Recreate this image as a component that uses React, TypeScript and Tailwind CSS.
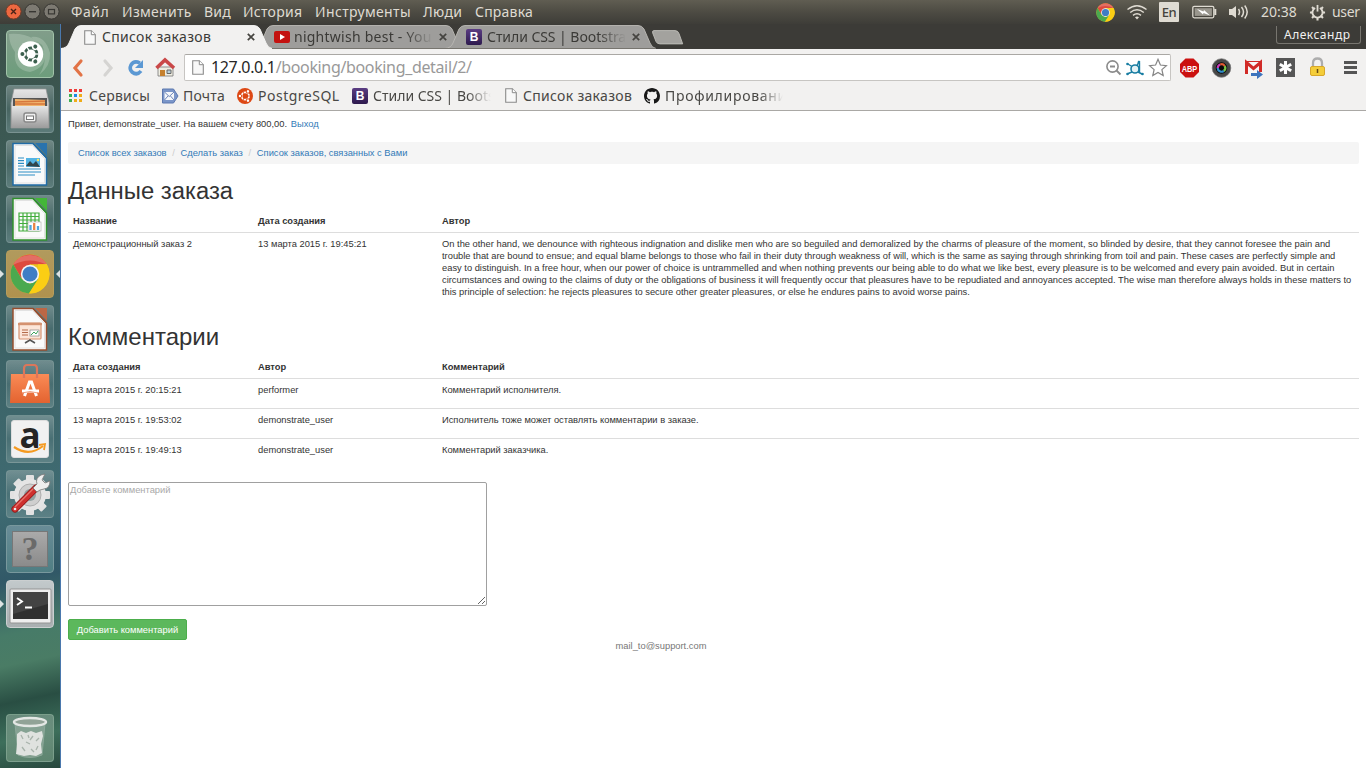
import React from 'react';

const Page = ({ className = '' }: { className?: string }) => (
  <svg viewBox="0 0 12 15" className={'h-[15px] w-3 shrink-0 ' + className}>
    <path d="M.7.7h6.6l4 4v9.6H.7z" fill="#f8f8f8" stroke="#8b8b8b" strokeWidth="1.1" />
    <path d="M7.3.7v4h4" fill="#fff" stroke="#8b8b8b" />
  </svg>
);

const BootstrapMark = () => (
  <span className="flex h-4 w-4 shrink-0 items-center justify-center rounded-[2px] bg-linear-to-b from-[#5b3d83] to-[#2e1a4e] font-['Liberation_Sans',sans-serif] text-[12px] font-bold leading-none text-white">
    B
  </span>
);

const Friends = ({ color, bg }: { color: string; bg: string }) => (
  <g>
    <circle r="6" fill="none" stroke={color} strokeWidth="2.8" />
    {[0, 120, 240].map((a) => (
      <g key={a} transform={`rotate(${a})`}>
        <circle cx="-8" r="3" fill={bg} />
        <circle cx="-8.6" r="2" fill={color} />
        <path d="M3 0h6" stroke={bg} strokeWidth="1.3" />
      </g>
    ))}
  </g>
);

const Chrome = ({ className }: { className: string }) => (
  <svg viewBox="-20 -20 40 40" className={className}>
    <circle r="19.4" fill="#e9c41d" />
    <path d="M-16.8-9.7A19.4 19.4 0 0 1 16.8-9.7L0-9.7L-8.4 4.8z" fill="#dd4a3e" />
    <path d="M-16.8-9.7L-8.4 4.8L0 9.7L8.4 4.8L-1 19.4A19.4 19.4 0 0 1-16.8-9.7z" fill="#4ba94f" />
    <path d="M16.8-9.7A19.4 19.4 0 0 1-1 19.4L8.4 4.8L8-9.7z" fill="#fbce14" />
    <circle r="9.2" fill="#f3f3f3" />
    <circle r="7.6" fill="#3f7dc5" />
    <path d="M-17-9A19.4 19.4 0 0 1 17-9Q0-18-17-9z" fill="#fff" opacity=".2" />
  </svg>
);

const Doc = ({ color, light, children }: { color: string; light: string; children: React.ReactNode }) => (
  <svg viewBox="0 0 48 48" className="h-full w-full">
    <path d="M7 3.500h20l13.500 14.500v27H7z" fill="#fafafa" stroke={color} strokeWidth="1.5" />
    <path d="M9 5.500h17.500l12 13v24.500H9z" fill="none" stroke="#e2e2e2" />
    <path d="M29 3h12v13z" fill={light} />
    <path d="M27 3.500l13.500 14.500" stroke={color} strokeWidth="1.2" />
    {children}
  </svg>
);

const tileBase = 'relative h-12 w-12 shrink-0 rounded-[4px] border ';
const tileGlass = 'border-[#86a0a0]/50 bg-linear-to-b from-[#a4b5b5]/50 via-[#5f8082]/35 to-[#789798]/55';

const Tile = ({ children, className = tileGlass }: { children: React.ReactNode; className?: string }) => (
  <div className={tileBase + className}>
    <div className="absolute -inset-px">{children}</div>
  </div>
);

const Launcher = () => (
  <aside className="flex w-[61px] shrink-0 flex-col items-start gap-[7px] border-r border-[#4a78ad] bg-[linear-gradient(168deg,#3b4f48_0%,#3c5c57_20%,#3c6367_45%,#3f6b72_64%,#315867_74%,#477b68_81%,#4a7c65_85%,#294e43_90%,#3d6f5b_95%,#28483e_100%)] pt-[6px] pb-[6px] pl-[6px]">
    <Tile className="border-[#a1c3a9] bg-linear-to-b from-[#819d8a] to-[#6d9d7c]">
      <svg viewBox="0 0 48 48" className="h-full w-full">
        <path d="M3 4Q30 2 39 23Q40 38 24 42Q7 40 9 22Q3 14 3 4M25 7Q39 5 44 23Q45 36 33 45Q43 30 36 15" fill="#d9ead9" opacity=".27" />
        <circle cx="24.5" cy="24" r="12.7" fill="#fff" />
        <g transform="translate(25 24)"><Friends color="#3b5f4e" bg="#fff" /></g>
      </svg>
    </Tile>
    <Tile>
      <svg viewBox="0 0 48 48" className="h-full w-full">
        <defs><linearGradient id="drawer" x2="0" y2="1"><stop stopColor="#e6e6e6" /><stop offset="1" stopColor="#9b9b9b" /></linearGradient></defs>
        <path d="M8 4h32l3 14v25H5V18z" fill="url(#drawer)" stroke="#999" strokeWidth=".7" />
        <path d="M7 13h34v8H7z" fill="#555" />
        <path d="M9 14l30 1v6H9z" fill="#f0b66f" />
        <path d="M9 17l30-1M9 19h30" stroke="#d7773c" strokeWidth="1.3" />
        <path d="M6 21h36v22H6z" fill="url(#drawer)" />
        <rect x="18" y="28" width="12" height="9" rx="2" fill="#eee" stroke="#888" strokeWidth="1.4" />
        <rect x="20.5" y="31" width="7" height="3.5" fill="#fff" stroke="#777" />
      </svg>
    </Tile>
    <Tile>
      <Doc color="#216ba5" light="#2a73ad">
        <path d="M12 18h6M12 20.7h6M12 23.3h6M12 26h6M12 29h23M12 32h23M12 35h17" stroke="#2c8dc4" strokeWidth="1.2" />
        <rect x="20" y="18" width="14" height="9" fill="#54b4e4" />
        <path d="M20 26l4-5 3 3 3-3 4 6z" fill="#31464b" />
        <circle cx="32" cy="20" r="1.2" fill="#f1e767" />
      </Doc>
    </Tile>
    <Tile>
      <Doc color="#30912c" light="#43b637">
        <path d="M13 18h20v18H13zM13 21.5h20M13 25h20M13 28.5h20M13 32h20M17 18v18M21 18v18M25 18v18M29 18v18" fill="none" stroke="#42ad3c" strokeWidth="1.2" />
        <rect x="22" y="27" width="13" height="9" fill="#fff" stroke="#aaa" strokeWidth=".6" />
        <path d="M24.5 35v-5" stroke="#4fa5dd" strokeWidth="2.3" /><path d="M28.2 35v-7" stroke="#e98345" strokeWidth="2.3" /><path d="M32 35v-4" stroke="#4fa5dd" strokeWidth="2.3" />
      </Doc>
    </Tile>
    <div className="relative">
      <Tile className="border-[#b69d5d] bg-linear-to-b from-[#b19a5d] to-[#b0924e]">
        <Chrome className="m-[4px] h-10 w-10" />
      </Tile>
      <svg viewBox="0 0 61 10" className="absolute top-[19px] -left-[6px] h-[10px] w-[61px]">
        <path d="M0 1l4 4-4 4zM60 1l-4 4 4 4z" fill="#dde3e3" />
      </svg>
    </div>
    <Tile>
      <Doc color="#974d2d" light="#bc6745">
        <rect x="13" y="18" width="22" height="16" rx="1" fill="#fce6d9" stroke="#d59270" strokeWidth="1.2" />
        <path d="M12 19h24" stroke="#d59270" strokeWidth="2.4" />
        <path d="M16 25h6M16 27.5h6M16 30h6" stroke="#b46b4b" strokeWidth="1.2" />
        <rect x="24" y="25" width="9" height="6" fill="#fff" stroke="#777" strokeWidth=".6" />
        <path d="M25 30l3-3 2 2 2-3" fill="none" stroke="#3ba35c" />
        <path d="M24 34v2m-5 2l5-3 5 3" fill="none" stroke="#555" strokeWidth="1.6" />
      </Doc>
    </Tile>
    <Tile>
      <svg viewBox="0 0 48 48" className="h-full w-full">
        <defs><linearGradient id="bag" x2="0" y2="1"><stop stopColor="#fa8b56" /><stop offset="1" stopColor="#e36330" /></linearGradient></defs>
        <path d="M5 14h38l1 29H4z" fill="url(#bag)" />
        <path d="M18 18V9q0-4 3-4h7q3 0 3 4v9" fill="none" stroke="#dc765a" strokeWidth="2.2" />
        <path d="M18.500 36l5-14h2l5 14" fill="none" stroke="#fff" strokeWidth="3" />
        <path d="M16 31h17" stroke="#fff" strokeWidth="3" /><path d="M16 33q8-3 16 0" fill="none" stroke="#eea183" />
      </svg>
    </Tile>
    <Tile>
      <div className="relative m-[5px] h-[38px] w-[38px] rounded-[3px] border border-[#dedede] bg-[#f1f1f1] font-['Open_Sans',sans-serif]">
        <span className="absolute inset-x-0 -top-[4px] text-center text-[35px] font-bold leading-[36px] text-[#252525]">a</span>
        <svg viewBox="0 0 38 38" className="absolute -inset-px h-[38px] w-[38px]">
          <path d="M3 27q15 10 29-1" fill="none" stroke="#f49a20" strokeWidth="2.2" />
          <path d="M28 25l6-1-1 6" fill="none" stroke="#f49a20" strokeWidth="1.8" />
        </svg>
      </div>
    </Tile>
    <Tile>
      <svg viewBox="0 0 48 48" className="h-full w-full">
        <g transform="translate(24 25)">
          {[0, 45, 90, 135].map((a) => <rect key={a} x="-4" y="-20" width="8" height="40" rx="1" fill="#e2e2e2" transform={`rotate(${a})`} />)}
          <circle r="16" fill="#e5e5e5" /><circle r="11" fill="#cfcfcf" stroke="#aeaeae" /><circle r="6" fill="#91a1a1" />
        </g>
        <path d="M9 39L30 18" stroke="#8d1818" strokeWidth="7" strokeLinecap="round" />
        <path d="M9 39L30 18" stroke="#ce302e" strokeWidth="5.400" strokeLinecap="round" />
        <path d="M9 37L27 19" stroke="#e7736b" strokeWidth="1.3" />
        <path d="M27 18l4-4q-2-6 4-9l4-1-3 6 3 3 5-2q0 7-6 8l-4 1-3 2z" fill="#eee" stroke="#777" strokeWidth=".8" />
        <circle cx="9" cy="39" r="1.3" fill="#eee" />
      </svg>
    </Tile>
    <Tile className="border-[#78989d] bg-linear-to-b from-[#698c97] to-[#4f7e83]">
      <div className="m-[6px] flex h-9 w-9 items-center justify-center border border-[#777] bg-linear-to-b from-[#aaa] to-[#8b8b8b] font-['Liberation_Serif',serif] text-[34px] font-bold leading-none text-[#6a6a6a]">?</div>
    </Tile>
    <div className="relative">
      <Tile className="border-[#cbcfd0] bg-linear-to-b from-[#c2c9cb] to-[#a9afb1]">
        <svg viewBox="0 0 48 48" className="h-full w-full">
          <rect x="4" y="9" width="41" height="34" rx="1" fill="#eee" stroke="#949494" />
          <rect x="7" y="12" width="35" height="27" fill="#303030" />
          <path d="M7 12h35v12L7 34z" fill="#555" opacity=".5" />
          <path d="M11 18l5 3.500-5 3.500M19 27.500h7" fill="none" stroke="#fff" strokeWidth="1.9" />
        </svg>
      </Tile>
      <svg viewBox="0 0 5 10" className="absolute top-[19px] -left-[6px] h-[10px] w-[5px]"><path d="M0 1l4 4-4 4z" fill="#dde3e3" /></svg>
    </div>
    <div className="mt-auto">
      <Tile className="border-[#8daf9d]/60 bg-linear-to-b from-[#809f90]/70 to-[#6b927b]/80">
        <svg viewBox="0 0 48 48" className="h-full w-full">
          <path d="M9 9l3 32q12 5 24 0l3-32z" fill="#bdc9c1" opacity=".35" stroke="#d5ded8" />
          <path d="M11 20l4-3 5 2 5-2 5 2 6-2 1 5-2 8 1 9-6 3-6-1-6 1-8-2 1-10z" fill="#dfe2df" />
          <path d="M15 21l2 4M20 28l4 2M27 22l-3 4M33 24l-3 3M16 33l3 4M25 35l3 3M32 32l-2 4M22 21l1 3" fill="none" stroke="#a8b3ab" strokeWidth="1.3" />
          <ellipse cx="24" cy="8" rx="16" ry="4" fill="#91a397" stroke="#e3e7e4" strokeWidth="2.4" />
        </svg>
      </Tile>
    </div>
  </aside>
);

const menu = [
  { t: 'Файл', c: 'w-[51px] tracking-[0.5px]' },
  { t: 'Изменить', c: 'w-[82px] tracking-[0.3px]' },
  { t: 'Вид', c: 'w-[39px] tracking-[0.2px]' },
  { t: 'История', c: 'w-[72px] tracking-[0.25px]' },
  { t: 'Инструменты', c: 'w-[108px] tracking-[0.35px]' },
  { t: 'Люди', c: 'w-[52px] tracking-[0.3px]' },
  { t: 'Справка', c: 'w-[70px] tracking-[0.2px]' },
];

const TopBar = () => (
  <header className="flex h-6 shrink-0 items-center bg-linear-to-b from-[#605d52] via-[#4d4b43] to-[#3e3d38] text-[14px] leading-6 text-[#dfdbd2]">
    <svg viewBox="0 0 60 24" className="h-6 w-[71px] shrink-0 pr-[11px]">
      <circle cx="13.5" cy="11.5" r="7.6" fill="#ee6840" stroke="#733a27" />
      <path d="M11 9l5 5m0-5l-5 5" stroke="#4a2317" strokeWidth="1.4" />
      <circle cx="32.5" cy="11.5" r="7.6" fill="#7d7a72" stroke="#383733" /><path d="M29 11.7h7" stroke="#383733" strokeWidth="1.4" />
      <circle cx="51.5" cy="11.5" r="7.6" fill="#7d7a72" stroke="#383733" /><rect x="48.5" y="9.5" width="6" height="4.4" fill="none" stroke="#383733" strokeWidth="1.2" />
    </svg>
    {menu.map((m) => <span key={m.t} className={'shrink-0 whitespace-nowrap ' + m.c}>{m.t}</span>)}
    <div className="ml-auto flex items-center">
      <Chrome className="h-[19px] w-[19px]" />
      <svg viewBox="0 0 22 18" className="ml-[11px] h-[18px] w-[22px]" fill="none" stroke="#dfdbd2" strokeWidth="1.5">
        <path d="M1.500 6.500q9.500-7.500 19 0M4.200 9.500q6.800-5.300 13.600 0M7 12.300q4-3 8 0" /><path d="M9 14.200q2-1.300 4 0l-2 2.300z" fill="#dfdbd2" stroke="none" />
      </svg>
      <span className="ml-[11px] flex h-5 w-5 items-center justify-center rounded-[1px] bg-[#dfdbd2] text-[13px] font-medium tracking-[-0.4px] text-[#45433c]">En</span>
      <svg viewBox="0 0 25 16" className="ml-[13px] h-4 w-[25px]">
        <rect x=".8" y="2.3" width="21" height="11.500" rx="1.5" fill="none" stroke="#dfdbd2" strokeWidth="1.3" /><path d="M23.300 5v6" stroke="#dfdbd2" strokeWidth="2" />
        <rect x="2.7" y="4.2" width="17.2" height="7.700" fill="#99968d" /><path d="M5 5l6.500 2.500.5-1.500 6 5.500-6.500-2.500-.5 1.500z" fill="#fff" />
      </svg>
      <svg viewBox="0 0 21 18" className="ml-[11px] h-[18px] w-[21px]" fill="none" stroke="#dfdbd2" strokeWidth="1.5">
        <path d="M1 6h3l4-3v12l-4-3H1z" fill="#dfdbd2" stroke="none" /><path d="M10.5 6q2 3 0 6M13.5 4q4 5 0 10M16.7 2.5q5 6.5 0 13" />
      </svg>
      <span className="ml-[12px] w-[48px]">20:38</span>
      <svg viewBox="0 0 18 18" className="h-[17px] w-[17px]" fill="none" stroke="#dfdbd2">
        <path d="M6.500 4.200a5.400 5.400 0 1 0 5 0" strokeWidth="2" /><path d="M9 1v7" strokeWidth="1.9" /><path d="M1 9h3m10 0h3M9 14v3.5M3.2 3.2l2 2m9.6-2l-2 2M3.2 14.8l2-2m9.6 2l-2-2" strokeWidth="2.2" />
      </svg>
      <span className="ml-[6px] w-[34px] tracking-[-0.3px]">user</span>
    </div>
  </header>
);

const TabShape = ({ active = false }: { active?: boolean }) => (
  <svg viewBox="0 0 211 25" className="absolute top-0 left-0 h-[25px] w-[211px]">
    <path d="M0 24.5Q6 24 8 19L14 5Q16 1.5 20 1.5H193Q197 1.5 199 5L205 19Q207 24 211 24.5z" fill={active ? '#f2f1f0' : '#9e9d9b'} stroke={active ? '#f7f7f6' : '#bbb9b4'} strokeWidth=".9" />
    {active ? <path d="M0 24.5h211" stroke="#f2f1f0" /> : <path d="M0 24.5h211" stroke="#77756f" />}
  </svg>
);

const Tab = ({ icon, text, active = false, className }: { icon: React.ReactNode; text: string; active?: boolean; className: string }) => (
  <div className={'relative h-[25px] w-[192px] shrink-0 ' + (active ? 'z-10' : '')}>
    <TabShape active={active} />
    <div className="relative flex h-[25px] items-center pt-px">
      <span className="ml-[22px] flex w-[20px] shrink-0">{icon}</span>
      <span className={'w-[139px] shrink-0 overflow-hidden whitespace-nowrap text-[14px] leading-6 text-[#3b3a37] ' + className}>{text}</span>
      <svg viewBox="0 0 8 8" className="ml-[6px] h-2 w-2 shrink-0"><path d="M.8.8l6.4 6.4m0-6.4L.8 7.2" stroke="#454440" strokeWidth="1.7" /></svg>
    </div>
  </div>
);

const fadeEnd = '[mask-image:linear-gradient(to_right,#000_80%,transparent)]';

const TabStrip = () => (
  <div className="flex h-[25px] items-start bg-[#3c3b37]">
    <Tab active icon={<Page className="ml-px" />} text="Список заказов" className="-ml-px tracking-[0.3px]" />
    <Tab icon={<svg viewBox="0 0 16 12" className="h-3 w-4 -ml-px"><rect width="16" height="12" rx="2" fill="#c41210" /><path d="M6 3l5 3-5 3z" fill="#fff" /></svg>} text="nightwish best - You" className={'-ml-px tracking-[0.25px] ' + fadeEnd} />
    <Tab icon={<span className="-ml-px"><BootstrapMark /></span>} text="Стили CSS | Bootstra" className={'tracking-[-0.05px] ' + fadeEnd} />
    <svg viewBox="0 0 32 15" className="mt-[6px] ml-[15px] h-[15px] w-8"><path d="M2 .6h21q3 0 4 3l3.7 10.3H8q-3 0-4-2.4L.7 3Q0 .6 2 .6z" fill="#a3a29e" stroke="#c0beb9" strokeWidth=".9" /></svg>
    <span className="mr-[5px] ml-auto mt-[2px] h-[18px] w-[85px] whitespace-nowrap rounded-b-[3px] border border-t-0 border-[#77756f] pl-[7px] text-[12px] leading-[18px] tracking-[0.5px] text-[#f2f1f0]">Александр</span>
  </div>
);

const Toolbar = () => (
  <div className="flex h-[35px] items-center pt-px">
    <svg viewBox="0 0 120 24" className="ml-[9px] mt-px h-6 w-[120px] shrink-0" fill="none">
      <path d="M11 5L5 12l6 7" stroke="#e27346" strokeWidth="3.2" strokeLinecap="round" />
      <path d="M35 5l6 7-6 7" stroke="#d5d4d2" strokeWidth="3.2" strokeLinecap="round" />
      <path d="M70 7q-6-3-9 2-2 4 1 7 5 4 9-1" stroke="#5b98d3" strokeWidth="3.600" /><path d="M73 4v8h-8z" fill="#5b98d3" />
      <path d="M88 11h15v9H88z" fill="#efede1" stroke="#777" strokeWidth=".8" /><path d="M86.500 12l8.500-8 9 8" stroke="#ca4848" strokeWidth="3.600" /><path d="M90 14h5v6h-5z" fill="#c5802e" /><path d="M97 14h4v3.500h-4z" fill="#b8cfda" stroke="#666" />
    </svg>
    <div className="ml-[-6px] flex h-[27px] w-[987px] items-center rounded-[2px] border border-[#c7c5c2] border-t-[#aaa8a4] bg-white pl-[7px]">
      <Page />
      <span className="ml-[7px] whitespace-nowrap text-[16px] leading-6 tracking-[-0.35px] text-[#999]"><span className="text-[#272727]">127.0.0.1</span>/booking/booking_detail/2/</span>
      <svg viewBox="0 0 64 20" className="mr-[1px] ml-auto mt-px h-5 w-16 shrink-0" fill="none">
        <circle cx="7.500" cy="8.500" r="5.6" stroke="#8b8b8b" strokeWidth="1.6" /><path d="M5 8.500h5M11.500 12.500l4 4" stroke="#8b8b8b" strokeWidth="1.8" />
        <circle cx="30" cy="11" r="4" fill="#e4f2f6" stroke="#187da2" strokeWidth="1.6" /><path d="M22 5.500l5 3M22 16l5-2M32 8l2-5M34.500 5v10M33 14l4 2" stroke="#187da2" strokeWidth="1.4" />
        <circle cx="22.500" cy="6" r="1.3" fill="#187da2" /><circle cx="22.500" cy="16" r="1.3" fill="#187da2" /><circle cx="34" cy="4" r="1.3" fill="#187da2" /><circle cx="37.500" cy="16" r="1.3" fill="#187da2" />
        <path d="M53 1.3l2.400 5.700 6 .6-4.500 4 1.3 5.900-5.200-3.100-5.200 3.100 1.3-5.900-4.500-4 6-.6z" stroke="#858585" strokeWidth="1.2" />
      </svg>
    </div>
    <svg viewBox="0 0 186 24" className="mt-px h-6 w-[186px] shrink-0">
      <path d="M5.500 2h8L19 7.500v8L13.500 21h-8L0 15.500v-8z" transform="translate(9 .5)" fill="#cb1110" />
      <text x="18.500" y="15.500" textAnchor="middle" fontSize="9" fontWeight="bold" fill="#fff" fontFamily="Liberation Sans" textLength="15.500" lengthAdjust="spacingAndGlyphs">ABP</text>
      <circle cx="50.500" cy="12" r="9.300" fill="#484848" stroke="#777" strokeWidth=".7" /><circle cx="50.500" cy="12" r="5.800" fill="#090909" />
      <g fill="none" strokeWidth="2.200"><path d="M46.700 12a3.800 3.800 0 0 1 2.500-3.500" stroke="#c83ab9" /><path d="M49.200 8.500a3.800 3.800 0 0 1 4.500 1.500" stroke="#e35b32" /><path d="M53.700 10a3.800 3.800 0 0 1-1 5" stroke="#78c446" /><path d="M52.700 15a3.800 3.800 0 0 1-6-3" stroke="#318dcc" /></g>
      <path d="M74 5h17v13H74z" fill="#f7f7f7" /><path d="M75.500 18V6.500l7 6 7-6V16" fill="none" stroke="#d12b27" strokeWidth="3" /><path d="M75 5.500h15" stroke="#d12b27" /><path d="M80 17h6v-3l6 4.500-6 4.500v-3h-6z" fill="#3d74bd" />
      <rect x="105" y="2" width="19" height="19" fill="#565656" /><path d="M114.500 5v13M108.800 8.200l11.400 6.600m0-6.600l-11.400 6.600" stroke="#fff" strokeWidth="3" />
      <path d="M142 11V7q0-4.500 4.500-4.500T151 7v4" fill="none" stroke="#adadad" strokeWidth="2.300" /><rect x="139.500" y="10.500" width="14" height="9" rx="1.500" fill="#f4cd39" stroke="#d8a72a" /><path d="M146.500 13v4" stroke="#684b13" strokeWidth="1.500" />
      <path d="M173 6.500h13M173 11.500h13M173 16.500h13" stroke="#555" strokeWidth="2.800" />
    </svg>
  </div>
);

const appColors = ['#ef3b38', '#ef3b38', '#ef3b38', '#3baf51', '#1d8be5', '#efac18', '#3baf51', '#efac18', '#efac18'];

const Bookmarks = () => (
  <div className="flex h-[26px] items-center pb-[3px] text-[14px] leading-[23px] text-[#494845]">
    <svg viewBox="0 0 14 14" className="ml-[8px] h-[14px] w-[14px] shrink-0">{appColors.map((c, i) => <rect key={i} x={(i % 3) * 5} y={Math.floor(i / 3) * 5} width="3" height="3" fill={c} />)}</svg>
    <span className="ml-[6px] w-[73px] shrink-0 whitespace-nowrap tracking-[0.25px]">Сервисы</span>
    <svg viewBox="0 0 17 16" className="h-4 w-[17px] shrink-0"><path d="M.5 1h11l4.500 7-4.500 7H.500z" fill="#7b96c9" stroke="#5c78af" /><path d="M2.500 4h9.500v8H2.500z" fill="#f5f7fb" /><path d="M2.500 4l4.750 4.500L12 4M2.500 12l3.500-4m6 4L8.500 8" fill="none" stroke="#5c78af" strokeWidth=".9" /></svg>
    <span className="ml-[4px] w-[54px] shrink-0 whitespace-nowrap tracking-[0.2px]">Почта</span>
    <svg viewBox="0 0 16 16" className="h-4 w-4 shrink-0"><circle cx="8" cy="8" r="8" fill="#dd4814" /><g transform="translate(8.300 8) scale(.62)"><Friends color="#fff" bg="#dd4814" /></g></svg>
    <span className="ml-[5px] w-[94px] shrink-0 whitespace-nowrap tracking-[0.5px]">PostgreSQL</span>
    <BootstrapMark />
    <span className={'ml-[5px] w-[118px] shrink-0 overflow-hidden whitespace-nowrap ' + fadeEnd}>Стили CSS | Boots</span>
    <Page className="ml-[14px]" />
    <span className="ml-[6px] w-[121px] shrink-0 whitespace-nowrap tracking-[0.3px]">Список заказов</span>
    <svg viewBox="0 0 16 16" className="h-4 w-4 shrink-0"><path fill="#181818" d="M8 0C3.580 0 0 3.580 0 8c0 3.540 2.290 6.530 5.470 7.590.4.070.55-.170.55-.380 0-.190-.010-.820-.010-1.490-2.010.370-2.530-.490-2.690-.940-.090-.230-.480-.940-.820-1.130-.280-.150-.680-.520-.010-.530.630-.010 1.080.580 1.230.820.720 1.210 1.870.870 2.330.660.070-.520.280-.870.510-1.070-1.780-.200-3.640-.890-3.640-3.950 0-.870.310-1.590.820-2.150-.080-.200-.360-1.020.080-2.120 0 0 .670-.210 2.200.820.640-.180 1.320-.270 2-.270s1.360.090 2 .270c1.530-1.040 2.200-.820 2.200-.820.440 1.100.160 1.920.080 2.120.510.560.820 1.270.820 2.150 0 3.070-1.870 3.750-3.650 3.950.290.250.540.730.540 1.480 0 1.070-.010 1.930-.010 2.200 0 .210.150.460.550.380A8 8 0 0 0 16 8c0-4.420-3.580-8-8-8z" /></svg>
    <span className={'ml-[5px] w-[118px] shrink-0 overflow-hidden whitespace-nowrap tracking-[0.7px] ' + fadeEnd}>Профилировани</span>
  </div>
);

const cols = 'grid grid-cols-[185px_184px_1fr] pl-[5px]';

const HeadRow = ({ cells }: { cells: string[] }) => (
  <div className={cols + ' h-[23px] border-b border-[#ddd] pt-[5px] font-bold'}>
    {cells.map((c) => <span key={c}>{c}</span>)}
  </div>
);

const body = [
  'On the other hand, we denounce with righteous indignation and dislike men who are so beguiled and demoralized by the charms of pleasure of the moment, so blinded by desire, that they cannot foresee the pain and',
  'trouble that are bound to ensue; and equal blame belongs to those who fail in their duty through weakness of will, which is the same as saying through shrinking from toil and pain. These cases are perfectly simple and',
  'easy to distinguish. In a free hour, when our power of choice is untrammelled and when nothing prevents our being able to do what we like best, every pleasure is to be welcomed and every pain avoided. But in certain',
  'circumstances and owing to the claims of duty or the obligations of business it will frequently occur that pleasures have to be repudiated and annoyances accepted. The wise man therefore always holds in these matters to',
  'this principle of selection: he rejects pleasures to secure other greater pleasures, or else he endures pains to avoid worse pains.',
];

const comments = [
  ['13 марта 2015 г. 20:15:21', 'performer', 'Комментарий исполнителя.'],
  ['13 марта 2015 г. 19:53:02', 'demonstrate_user', 'Исполнитель тоже может оставлять комментарии в заказе.'],
  ['13 марта 2015 г. 19:49:13', 'demonstrate_user', 'Комментарий заказчика.'],
];

const Content = () => (
  <main className="flex flex-1 flex-col border-t border-[#aaa8a5] bg-white pr-[7px] pl-[7px] font-['Liberation_Sans',Arial,sans-serif] text-[9.330px] leading-[12px] text-[#333]">
    <p className="mt-[7px] tracking-[0.015px]">Привет, demonstrate_user. На вашем счету 800,00. <a className="ml-[1px] text-[#337ab7]">Выход</a></p>
    <nav className="mt-[12px] flex h-[22px] items-center rounded-[2px] bg-[#f5f5f5] pl-[10px] text-[#337ab7]">
      <a>Список всех заказов</a><span className="w-[14px] text-center text-[#ccc]">/</span>
      <a>Сделать заказ</a><span className="w-[14px] text-center text-[#ccc]">/</span>
      <a>Список заказов, связанных с Вами</a>
    </nav>
    <h1 className="mt-[13px] h-[33px] text-[23.850px] leading-[27px]">Данные заказа</h1>
    <HeadRow cells={['Название', 'Дата создания', 'Автор']} />
    <div className={cols + ' h-[90px] pt-[5px]'}>
      <span>Демонстрационный заказ 2</span><span>13 марта 2015 г. 19:45:21</span>
      <p>{body.map((l) => <span key={l} className="block whitespace-nowrap">{l}</span>)}</p>
    </div>
    <h1 className="h-[33px] text-[24px] leading-[27px]">Комментарии</h1>
    <HeadRow cells={['Дата создания', 'Автор', 'Комментарий']} />
    <div className="divide-y divide-[#ddd]">
      {comments.map((r) => (
        <div key={r[0]} className={cols + ' h-[30px] pt-[5px]'}>{r.map((c) => <span key={c}>{c}</span>)}</div>
      ))}
    </div>
    <textarea placeholder="Добавьте комментарий" className="mt-[13px] block h-[124px] w-[419px] shrink-0 resize rounded-[2px] border border-[#a0a0a0] px-px py-px placeholder:text-[#a9a9a9]" />
    <button className="mt-[13px] h-[21px] w-[119px] rounded-[2px] border border-[#4cae4c] bg-[#5cb85c] text-white">Добавить комментарий</button>
    <footer className="w-[1186px] text-center text-[#777]">mail_to@support.com</footer>
  </main>
);

export default function App() {
  return (
    <div className="flex h-[768px] w-[1366px] flex-col overflow-hidden font-['Noto_Sans','Open_Sans',sans-serif]">
      <TopBar />
      <div className="flex min-h-0 flex-1">
        <Launcher />
        <div className="flex min-w-0 flex-1 flex-col bg-[#f2f1f0]">
          <TabStrip />
          <Toolbar />
          <Bookmarks />
          <Content />
        </div>
      </div>
    </div>
  );
}
